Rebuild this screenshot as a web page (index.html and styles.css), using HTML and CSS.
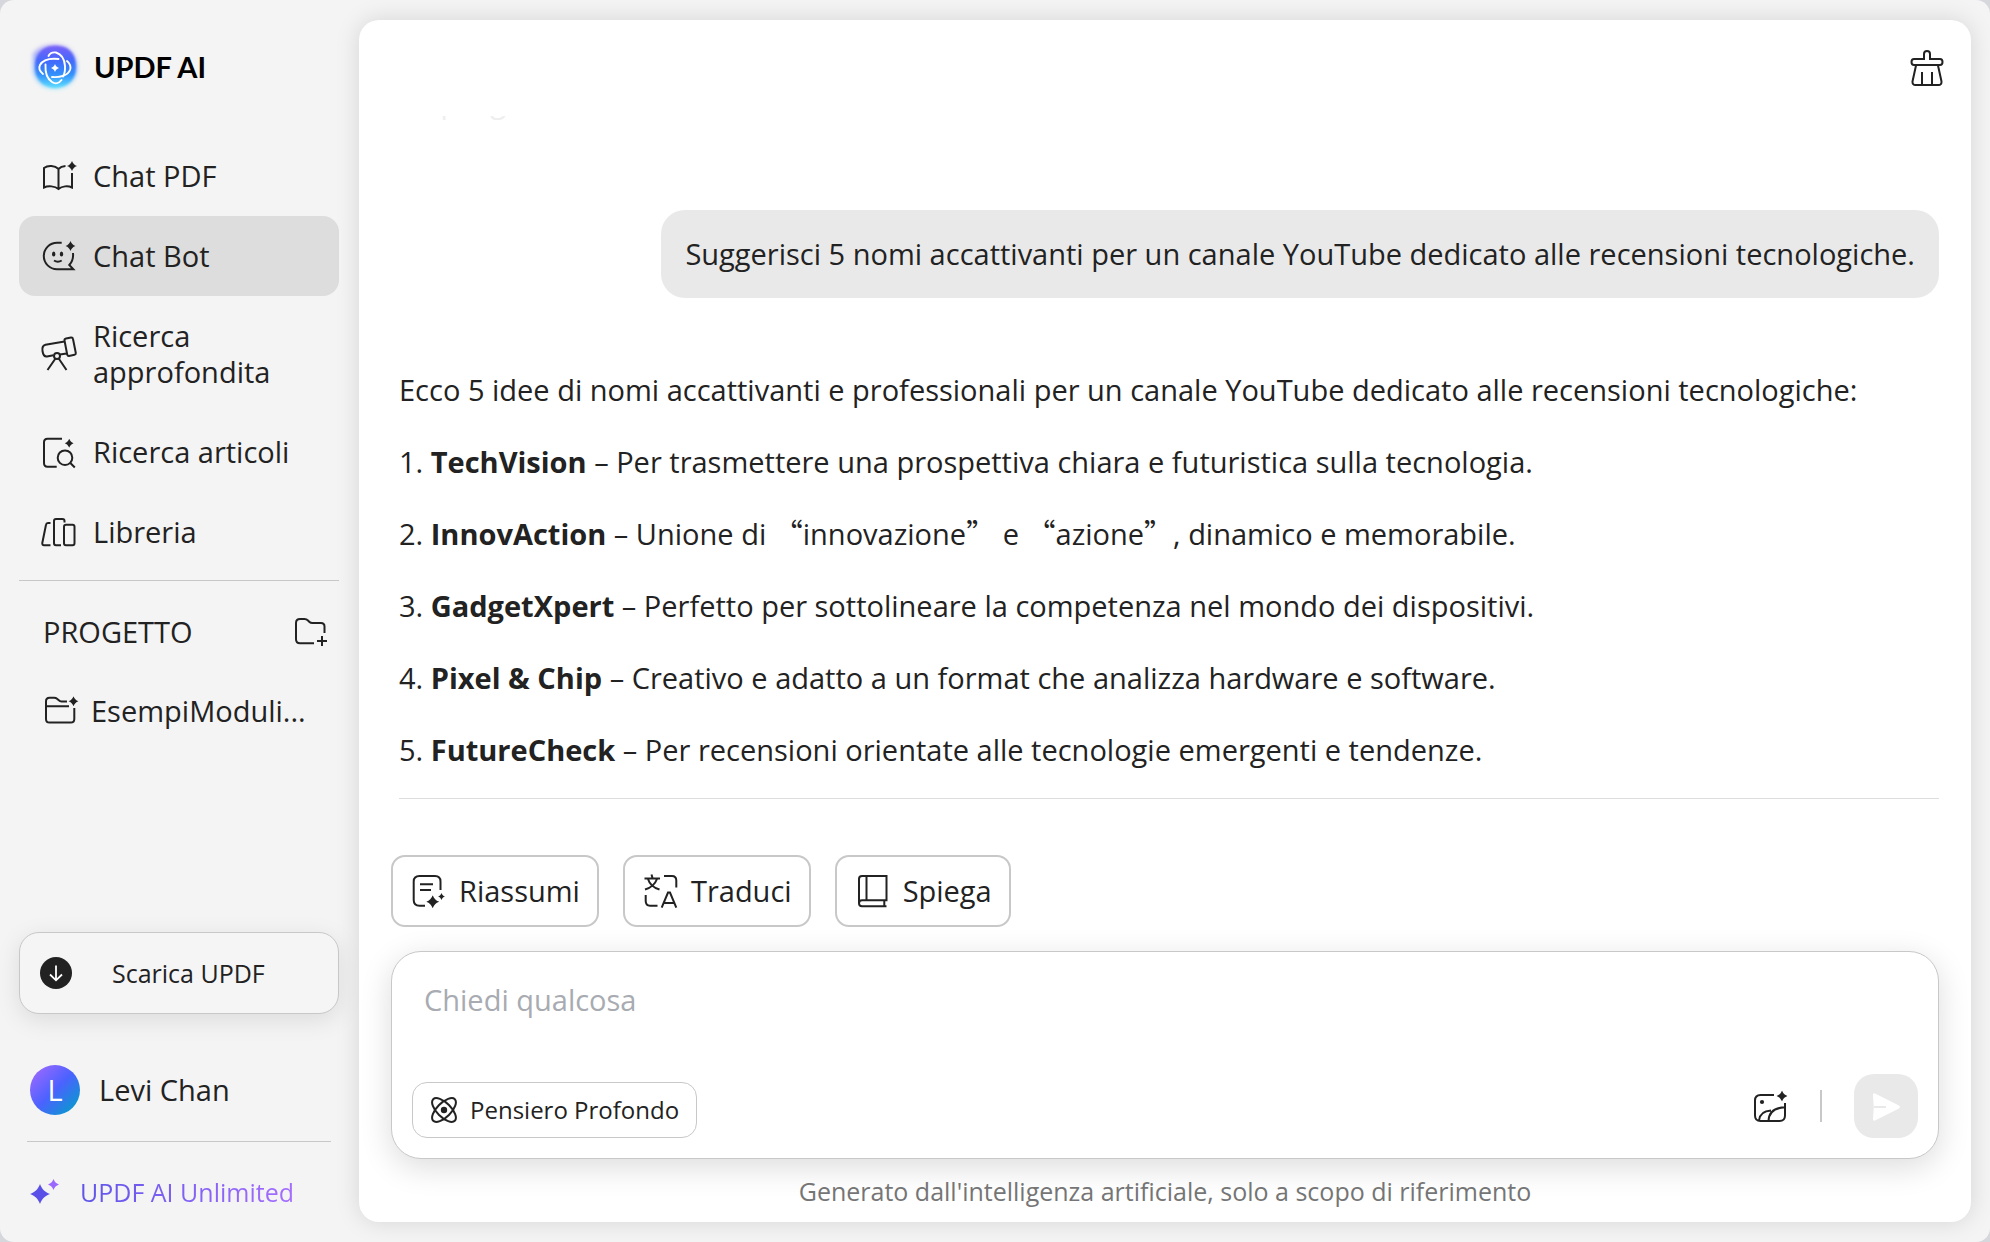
FILE: index.html
```html
<!DOCTYPE html>
<html lang="it">
<head>
<meta charset="utf-8">
<meta name="viewport" content="width=device-width, initial-scale=1">
<title>UPDF AI</title>
<link rel="stylesheet" href="styles.css">
</head>
<body>
<svg class="defs" aria-hidden="true">
  <symbol id="spark" viewBox="-10 -10 20 20"><path d="M0-10C2.200-4.500 4.500-2.200 10 0C4.500 2.200 2.200 4.500 0 10C-2.200 4.500-4.500 2.200-10 0C-4.500-2.200-2.200-4.500 0-10Z"/></symbol>
</svg>
<div class="app">
  <aside class="sidebar">
    <header class="brand">
      <svg class="logo" viewBox="0 0 50 50" aria-hidden="true">
        <defs>
          <linearGradient id="lg" x1="0" y1="0" x2="0" y2="1">
            <stop offset="0" stop-color="#7a62f8"/><stop offset=".35" stop-color="#4468fb"/><stop offset=".68" stop-color="#3390fb"/><stop offset="1" stop-color="#5fe0ff"/>
          </linearGradient>
          <filter id="soft" x="-20%" y="-20%" width="140%" height="140%"><feGaussianBlur stdDeviation="1.200"/></filter>
          <filter id="halo" x="-20%" y="-20%" width="140%" height="140%"><feGaussianBlur stdDeviation="2"/></filter>
        </defs>
        <path d="M3 12C8 4 20 2 28 3C40 4 46 12 47 24C48 36 40 46 26 47C12 47 5 40 3 28Z" fill="url(#lg)" opacity=".5" filter="url(#halo)"/>
        <path d="M7 14C12 5 20 3 29 4C40 5 46 13 46 25C46 37 38 45 26 46C14 46 6 38 5 27C5 22 5 18 7 14Z" fill="url(#lg)" filter="url(#soft)"/>
        <g fill="none" stroke="#fff" stroke-width="1.900" stroke-linecap="round">
          <path d="M18.500 14C20 11 23 10 26 10.500C31 12 34.500 17 35 24C35.300 29 34.500 32 33 34.500"/>
          <path d="M37 19C40 21.500 41 25 40 28C38 33 31 35.800 22 35"/>
          <path d="M31.500 38C29 41.500 25 42 22 40C17.500 37 15 31 15.500 22.500"/>
          <path d="M13 32C9.500 29 8.500 26 10 23C12.500 18.500 19 16 28.500 17"/>
        </g>
        <use href="#spark" x="21" y="22" width="8" height="8" fill="#fff"/>
      </svg>
      <h1 class="brand-name">UPDF AI</h1>
    </header>

    <nav class="nav">
      <a class="nav-item" href="#">
        <svg class="icon" viewBox="0 0 36 36" aria-hidden="true"><path d="M17.500 31V11C14 7.500 7 7 3 10V29.500C7 27.500 14 28 17.500 31C21 28 27 27.500 31 29.500V15M17.500 11Q20 8.300 24.500 8"/><use class="solid" href="#spark" x="26" y="3" width="10" height="10"/></svg>
        <span>Chat PDF</span>
      </a>
      <a class="nav-item active" href="#" aria-current="page">
        <svg class="icon" viewBox="0 0 36 36" aria-hidden="true"><path d="M20.700 4.800H16A13.200 13.200 0 0 0 16 31.200H32.300L28.300 27C31 24 32.500 20 32 15M13 22.500Q16.800 25 20.700 22.500"/><g class="solid"><ellipse cx="12.700" cy="16" rx="1.700" ry="2.600"/><ellipse cx="20.500" cy="16" rx="1.700" ry="2.600"/><use href="#spark" x="24.500" y="3" width="10" height="10"/></g></svg>
        <span>Chat Bot</span>
      </a>
      <a class="nav-item" href="#">
        <svg class="icon" viewBox="0 0 36 36" aria-hidden="true"><path d="M23.500 5.500L4.500 8.700C1.500 9.500 1 12 1.500 15C2 18.500 3 20.800 6 20.400L12.500 19.300M19 18.500L25.500 17.500M25 2.500L30 1.500Q31.700 1.300 32 3L34.800 17Q35 18.500 33.500 18.800L28 19.900Q26.500 20 26.200 18.500L23.500 4.500Q23.300 2.900 25 2.500ZM14.500 22.500L6.500 34M17.700 22.500L25.500 34"/><circle cx="16" cy="20" r="3"/></svg>
        <span>Ricerca approfondita</span>
      </a>
      <a class="nav-item" href="#">
        <svg class="icon" viewBox="0 0 36 36" aria-hidden="true"><path d="M21 4.700H6.500Q3 4.700 3 8.200V29Q3 32.700 6.500 32.700H15.700M29.300 29L33.800 33.500"/><circle cx="24" cy="23.700" r="7.300"/><use class="solid" href="#spark" x="23.700" y="4.700" width="9" height="9"/></svg>
        <span>Ricerca articoli</span>
      </a>
      <a class="nav-item" href="#">
        <svg class="icon" viewBox="0 0 36 36" aria-hidden="true"><path d="M9.500 9H7Q5.300 9 5 10.700L1.300 29Q1 31.200 3 31.200H9.500M23.500 8.500V7Q23.500 5 21.500 5H15Q13 5 13 7V29Q13 31.200 15 31.200H20"/><rect x="23" y="10.700" width="10.500" height="20.500" rx="2"/></svg>
        <span>Libreria</span>
      </a>
    </nav>

    <section class="projects">
      <div class="projects-head">
        <h2 class="projects-title">PROGETTO</h2>
        <button class="icon-button" type="button" aria-label="Nuovo progetto">
          <svg class="icon" viewBox="0 0 36 36" aria-hidden="true"><path d="M21 29.300H7Q3 29.300 3 25.300V9Q3 5 7 5H11.500Q13.500 5 15 6.500L16.500 8Q17.500 9 19.500 9H28Q31.500 9 31.500 12.500V19M29 22V32M24 27H34"/></svg>
        </button>
      </div>
      <a class="project" href="#">
        <svg class="icon" viewBox="0 0 36 36" aria-hidden="true"><path d="M24 8.500H18.500Q17 8.500 15.500 7L14 5.700Q13 4.800 11 4.800H6.500Q3 4.800 3 8.300V26Q3 29.600 6.500 29.600H27.700Q31.300 29.600 31.300 26V15M3 13.300H26"/><use class="solid" href="#spark" x="25.500" y="3.200" width="10" height="10"/></svg>
        <span class="project-name">EsempiModuli...</span>
      </a>
    </section>

    <div class="sidebar-foot">
      <button class="download" type="button">
        <svg class="download-icon" viewBox="0 0 32 32" aria-hidden="true"><circle cx="16" cy="16" r="16" fill="#222"/><path d="M16 8.500V23M10 17.500L16 23.300L22 17.500" fill="none" stroke="#fff" stroke-width="1.800"/></svg>
        <span>Scarica UPDF</span>
      </button>
      <div class="user"><span class="avatar">L</span><span>Levi Chan</span></div>
      <a class="plan" href="#">
        <svg class="plan-icon" viewBox="0 0 30 30" aria-hidden="true"><use href="#spark" x="0" y="7" width="20" height="20" fill="#5a50e8"/><use href="#spark" x="18" y="2" width="11" height="11" fill="#9b68ff"/></svg>
        <span class="plan-name">UPDF AI Unlimited</span>
      </a>
    </div>
  </aside>

  <main class="panel">
    <div class="toolbar">
      <button class="icon-button" type="button" aria-label="Cancella chat">
        <svg class="icon" viewBox="0 0 36 36" aria-hidden="true"><path d="M15 9V4Q15 1 18 1Q21 1 21 4V9H31Q33.500 9 33.500 12Q33.500 15 31 15H5Q2.500 15 2.500 12Q2.500 9 5 9ZM7 15.500L3.500 31.500Q3.300 35 6.500 35H29.500Q32.700 35 32.500 31.500L29 15.500M13 22V35M23 22V35"/></svg>
      </button>
    </div>
    <div class="log">
      <p class="earlier">Riepilogo</p>
      <p class="bubble">Suggerisci 5 nomi accattivanti per un canale YouTube dedicato alle recensioni tecnologiche.</p>
      <article class="reply">
        <p>Ecco 5 idee di nomi accattivanti e professionali per un canale YouTube dedicato alle recensioni tecnologiche:</p>
        <ol class="ideas">
          <li>1. <strong>TechVision</strong> – Per trasmettere una prospettiva chiara e futuristica sulla tecnologia.</li>
          <li>2. <strong>InnovAction</strong> – Unione di <span class="q" lang="zh-CN">“</span>innovazione<span class="q" lang="zh-CN">”</span> e <span class="q" lang="zh-CN">“</span>azione<span class="q" lang="zh-CN">”</span>, dinamico e memorabile.</li>
          <li>3. <strong>GadgetXpert</strong> – Perfetto per sottolineare la competenza nel mondo dei dispositivi.</li>
          <li>4. <strong>Pixel &amp; Chip</strong> – Creativo e adatto a un format che analizza hardware e software.</li>
          <li>5. <strong>FutureCheck</strong> – Per recensioni orientate alle tecnologie emergenti e tendenze.</li>
        </ol>
      </article>
    </div>
    <div class="tools">
      <button class="tool" type="button">
        <svg class="icon" viewBox="0 0 36 36" aria-hidden="true"><path d="M14 32.700H8.500Q2.700 32.700 2.700 27V8.500Q2.700 3 8.500 3H24Q29.500 3 29.500 8.500V17M9 11.300H22M9 17H20"/><g class="solid"><use href="#spark" x="15.200" y="22.200" width="13" height="13"/><use href="#spark" x="27" y="20" width="7" height="7"/></g></svg>
        <span>Riassumi</span>
      </button>
      <button class="tool" type="button">
        <svg class="icon" viewBox="0 0 36 36" aria-hidden="true"><path d="M8.500 1.500L9.500 5M1.500 5.500H17M5 6Q7.500 14 16.500 16.500M14 6Q11 14 2 16.500M21 3H29Q33.300 3 33.300 7.500V14.500M2.700 22V28Q2.700 32.700 7 32.700H14.500M18.700 34.700L25 19.500H27L33.300 34.700M21 30H31"/></svg>
        <span>Traduci</span>
      </button>
      <button class="tool" type="button">
        <svg class="icon" viewBox="0 0 36 36" aria-hidden="true"><path d="M4 30V6Q4 3 7 3H31.500V27.300H7Q4 27.300 4 30.300Q4 33.300 7 33.300H31.500M11.500 3V27.300M29.300 27.300V33.300"/></svg>
        <span>Spiega</span>
      </button>
    </div>
    <form class="composer">
      <textarea class="prompt" rows="1" placeholder="Chiedi qualcosa" aria-label="Chiedi qualcosa"></textarea>
      <div class="composer-row">
        <button class="think" type="button">
          <svg class="think-icon" viewBox="0 0 28 28" aria-hidden="true"><g fill="none" stroke="#222" stroke-width="2"><ellipse cx="14" cy="14" rx="15.300" ry="7" transform="rotate(45 14 14)"/><ellipse cx="14" cy="14" rx="15.300" ry="7" transform="rotate(-45 14 14)"/></g><circle cx="14" cy="14" r="3.200" fill="#222"/></svg>
          <span>Pensiero Profondo</span>
        </button>
        <div class="composer-actions">
          <button class="icon-button" type="button" aria-label="Aggiungi immagine">
            <svg class="icon" viewBox="0 0 36 36" aria-hidden="true"><path d="M22 7H8.500Q3 7 3 12.500V27.500Q3 33 8.500 33H27.500Q33 33 33 27.500V15M7 32.500Q8 23 19 22.500M16.500 33Q17 20 33 19.300"/><g class="solid"><circle cx="10" cy="14" r="2.100"/><use href="#spark" x="24.500" y="2.500" width="11" height="11"/></g></svg>
          </button>
          <span class="sep"></span>
          <button class="send" type="submit" aria-label="Invia">
            <svg class="send-icon" viewBox="0 0 64 64" aria-hidden="true"><path d="M19 21Q19 18.600 21.500 19.700L44.500 31.200Q47.500 33 44.500 34.800L21.500 46.300Q19 47.400 19 45Q20.500 33 19 21Z" fill="#fff"/><path d="M20 33H32" stroke="#e9e9e9" stroke-width="2"/></svg>
          </button>
        </div>
      </div>
    </form>
    <p class="notice">Generato dall'intelligenza artificiale, solo a scopo di riferimento</p>
  </main>
</div>
</body>
</html>
```

FILE: styles.css
```css
* { box-sizing: border-box; }

html { background: #d6d7dc; }

body, h1, h2, p, ol { margin: 0; padding: 0; }

body, button, textarea {
  font-family: "Open Sans", "Noto Sans", sans-serif;
  font-size: 29px;
  line-height: 36px;
  color: #222;
}

a { color: inherit; text-decoration: none; }

button { padding: 0; border: 0; background: none; }

.defs { display: none; }

.app {
  display: grid;
  grid-template-columns: 359px minmax(0, 1fr);
  grid-template-rows: minmax(0, 1fr);
  height: 100vh;
  border-radius: 14px;
  background: #f4f4f4;
  overflow: hidden;
}

.icon {
  display: block;
  flex: none;
  width: 36px;
  height: 36px;
  overflow: visible;
  fill: none;
  stroke: #222;
  stroke-width: 2;
}

.solid { fill: #222; stroke: none; }

.icon-button { display: block; flex: none; }

/* Sidebar */
.sidebar {
  display: flex;
  flex-direction: column;
  padding: 42px 20px 32px 19px;
}

.brand {
  display: flex;
  align-items: center;
  gap: 14px;
  padding-left: 11px;
  margin-bottom: 44px;
}

.logo { width: 50px; height: 50px; overflow: visible; }

.brand-name {
  font: 700 29px/36px Lato, sans-serif;
  color: #000;
}

.nav { padding-bottom: 8px; border-bottom: 1px solid #c8c8c8; }

.nav-item {
  display: flex;
  align-items: center;
  gap: 16px;
  padding: 22px;
  border-radius: 16px;
}

.nav-item.active { background: #ddd; }

.projects { padding: 33px 10px 0 24px; }

.projects-head {
  display: flex;
  justify-content: space-between;
  align-items: center;
  margin-bottom: 43px;
}

.projects-title { font-size: 29px; font-weight: 400; }

.project { display: flex; align-items: center; gap: 12px; }

.project-name { white-space: nowrap; }

.sidebar-foot { margin-top: auto; }

.download {
  display: flex;
  align-items: center;
  gap: 40px;
  width: 100%;
  height: 82px;
  padding: 0 20px;
  border: 1px solid #c8c8c8;
  border-radius: 20px;
  background: #f5f5f5;
  box-shadow: 0 6px 24px rgba(0, 0, 0, .1);
  font-size: 25px;
}

.download-icon { width: 32px; height: 32px; }

.user {
  display: flex;
  align-items: center;
  gap: 19px;
  margin: 51px 8px 0;
  padding: 0 0 26px 3px;
  border-bottom: 1px solid #c8c8c8;
}

.avatar {
  width: 50px;
  height: 50px;
  border-radius: 50%;
  background: linear-gradient(135deg, #a069ff 5%, #4b62ff 50%, #00a0c8 95%);
  color: #fff;
  line-height: 50px;
  text-align: center;
}

.plan {
  display: flex;
  align-items: center;
  gap: 20px;
  margin-top: 32px;
  padding-left: 11px;
}

.plan-icon { width: 30px; height: 30px; }

.plan-name {
  font-size: 25px;
  background: linear-gradient(90deg, #5f55e8, #a56eff);
  background-clip: text;
  color: transparent;
}

/* Chat panel */
.panel {
  display: flex;
  flex-direction: column;
  min-width: 0;
  margin: 20px 19px 20px 0;
  padding: 0 32px 15px;
  border-radius: 20px;
  background: #fff;
  box-shadow: 0 0 24px rgba(0, 0, 0, .13);
}

.toolbar {
  display: flex;
  justify-content: flex-end;
  flex: none;
  height: 96px;
  padding: 30px 0;
  margin-right: -6px;
}

.log {
  display: flex;
  flex-direction: column;
  justify-content: flex-end;
  flex: 1;
  min-height: 0;
  margin-left: 8px;
  overflow: hidden;
}

.earlier { flex: none; margin-bottom: 90px; color: #eee; }

.bubble {
  flex: none;
  align-self: flex-end;
  margin-bottom: 74px;
  padding: 26px 24px;
  border-radius: 24px;
  background: #e9e9e9;
}

.reply {
  flex: none;
  padding-bottom: 30px;
  border-bottom: 1px solid #ddd;
}

.ideas { list-style: none; }

.ideas li { margin-top: 36px; }

.q { font-family: "Noto Sans CJK SC", sans-serif; line-height: 1; }

.tools { display: flex; gap: 24px; margin: 56px 0 24px; }

.tool {
  display: flex;
  align-items: center;
  gap: 12px;
  height: 72px;
  padding: 0 17px 0 18px;
  border: 2px solid #c8c8c8;
  border-radius: 14px;
}

.composer {
  padding: 30px 20px 20px;
  border: 1px solid #c8c8c8;
  border-radius: 30px;
  background: #fff;
  box-shadow: 0 8px 32px rgba(0, 0, 0, .14);
}

.prompt {
  display: block;
  width: 100%;
  height: 72px;
  margin-bottom: 20px;
  padding: 0 12px;
  border: 0;
  outline: 0;
  resize: none;
  background: none;
}

.prompt::placeholder { color: #a8abb2; }

.composer-row {
  display: flex;
  justify-content: space-between;
  align-items: flex-end;
}

.think {
  display: flex;
  align-items: center;
  gap: 12px;
  height: 56px;
  padding: 0 17px;
  border: 1px solid #c8c8c8;
  border-radius: 15px;
  font-size: 24px;
}

.think-icon { width: 28px; height: 28px; }

.composer-actions { display: flex; align-items: center; gap: 32px; }

.sep { width: 2px; height: 32px; background: #c8c8c8; }

.send { width: 64px; height: 64px; border-radius: 20px; background: #e9e9e9; }

.send-icon { display: block; width: 64px; height: 64px; }

.notice {
  margin-top: 16px;
  font-size: 25px;
  line-height: 32px;
  text-align: center;
  color: #757575;
}
```
